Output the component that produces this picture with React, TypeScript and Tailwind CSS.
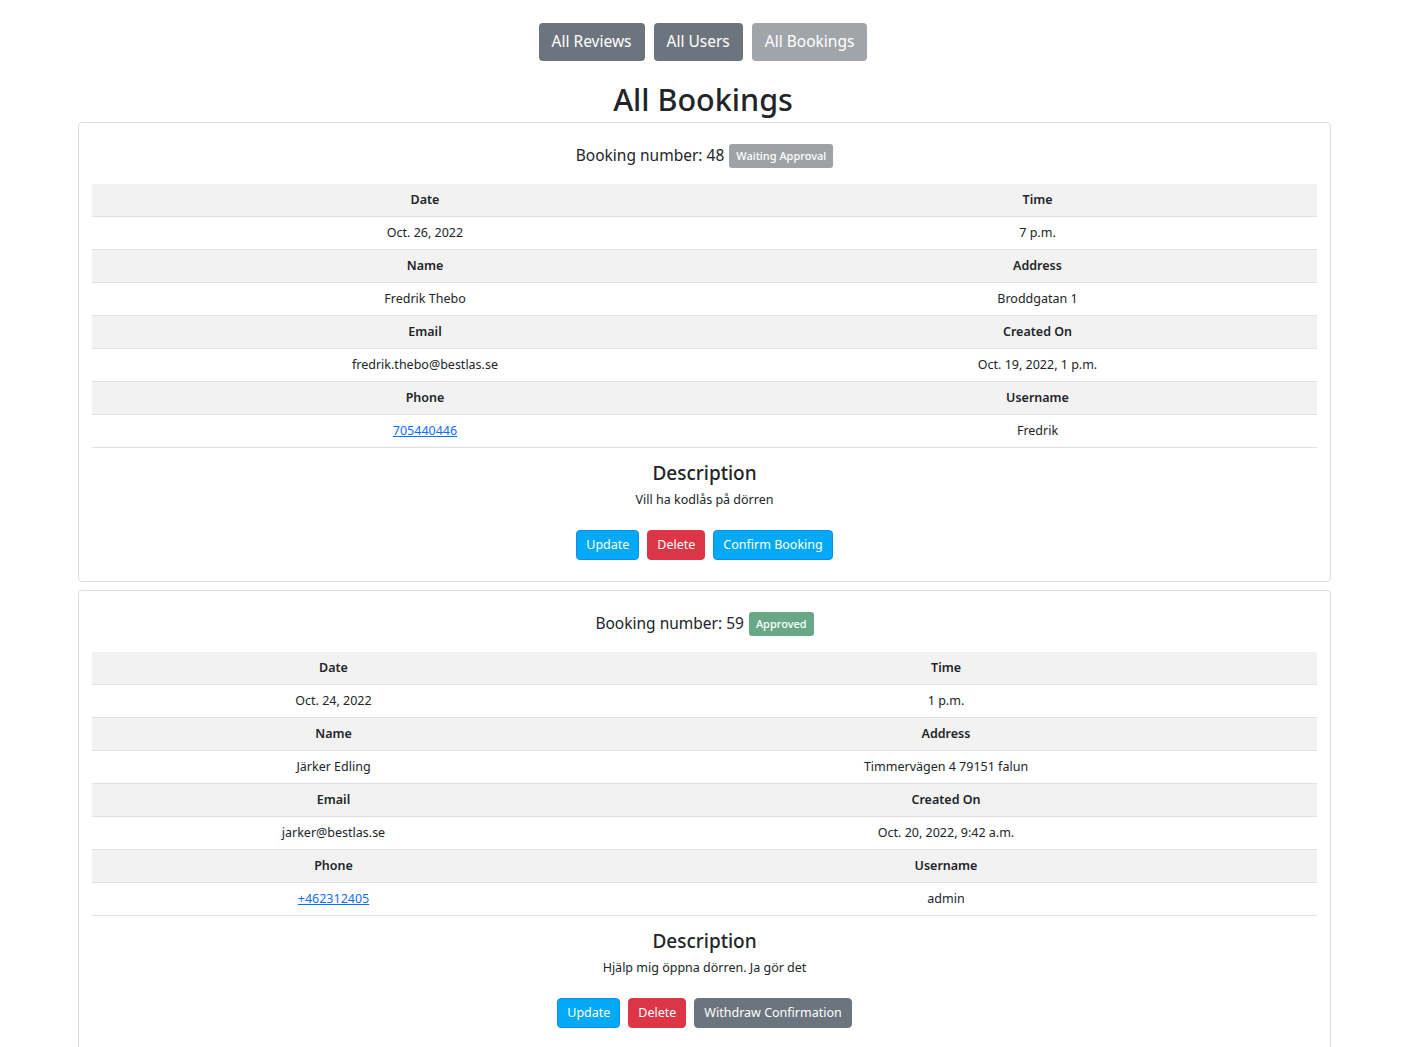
import React from 'react';

type Booking = {
  number: number;
  status: 'waiting' | 'approved';
  date: string;
  time: string;
  name: string;
  address: string;
  email: string;
  createdOn: string;
  phone: string;
  username: string;
  description: string;
  colClass: string;
};

const bookings: Booking[] = [
  {
    number: 48,
    status: 'waiting',
    date: 'Oct. 26, 2022',
    time: '7 p.m.',
    name: 'Fredrik Thebo',
    address: 'Broddgatan 1',
    email: 'fredrik.thebo@bestlas.se',
    createdOn: 'Oct. 19, 2022, 1 p.m.',
    phone: '705440446',
    username: 'Fredrik',
    description: 'Vill ha kodlås på dörren',
    colClass: 'grid-cols-[666px_1fr]',
  },
  {
    number: 59,
    status: 'approved',
    date: 'Oct. 24, 2022',
    time: '1 p.m.',
    name: 'Järker Edling',
    address: 'Timmervägen 4 79151 falun',
    email: 'jarker@bestlas.se',
    createdOn: 'Oct. 20, 2022, 9:42 a.m.',
    phone: '+462312405',
    username: 'admin',
    description: 'Hjälp mig öppna dörren. Ja gör det',
    colClass: 'grid-cols-[483px_1fr]',
  },
];

const HeadRow: React.FC<{ cols: string; a: string; b: string }> = ({ cols, a, b }) => (
  <div className={`grid ${cols} h-[33px] items-center bg-[#f2f2f2] border-b border-[#dee2e6] text-[12.5px] font-semibold text-[#212529]`}>
    <div className="text-center">{a}</div>
    <div className="text-center">{b}</div>
  </div>
);

const DataRow: React.FC<{ cols: string; a: React.ReactNode; b: React.ReactNode }> = ({ cols, a, b }) => (
  <div className={`grid ${cols} h-[33px] items-center bg-white border-b border-[#dee2e6] text-[12.5px] text-[#212529]`}>
    <div className="text-center">{a}</div>
    <div className="text-center">{b}</div>
  </div>
);

const BookingCard: React.FC<{ b: Booking }> = ({ b }) => (
  <div className="border border-[#dcdcdc] rounded-[4px] px-[13px] pt-[21px] pb-[21px] mb-[8px]">
    <div className="flex items-center justify-center h-[24px] mb-[16px]">
      <span className="text-[15.5px] text-[#212529]">Booking number: {b.number}</span>
      {b.status === 'waiting' ? (
        <span className="ml-[5px] h-[24px] px-[7px] flex items-center rounded-[3px] bg-[#9ea2a7] text-white text-[11px] font-medium">
          Waiting Approval
        </span>
      ) : (
        <span className="ml-[5px] h-[24px] px-[7px] flex items-center rounded-[3px] bg-[#67a986] text-white text-[11px] font-medium">
          Approved
        </span>
      )}
    </div>

    <div>
      <HeadRow cols={b.colClass} a="Date" b="Time" />
      <DataRow cols={b.colClass} a={b.date} b={b.time} />
      <HeadRow cols={b.colClass} a="Name" b="Address" />
      <DataRow cols={b.colClass} a={b.name} b={b.address} />
      <HeadRow cols={b.colClass} a="Email" b="Created On" />
      <DataRow cols={b.colClass} a={b.email} b={b.createdOn} />
      <HeadRow cols={b.colClass} a="Phone" b="Username" />
      <DataRow
        cols={b.colClass}
        a={<a href="#" className="text-[#0d6efd] underline">{b.phone}</a>}
        b={b.username}
      />
    </div>

    <h3 className="text-center text-[19px] font-medium text-[#212529] leading-[24px] mt-[13px]">Description</h3>
    <p className="text-center text-[12.5px] text-[#212529] leading-[20px] mt-[5px]">{b.description}</p>

    <div className="flex justify-center gap-[8px] mt-[20px]">
      <button className="h-[30px] px-[9px] rounded-[4px] bg-[#03a9f4] border border-[#0d8ce8] text-white text-[12.5px]">Update</button>
      <button className="h-[30px] px-[9px] rounded-[4px] bg-[#dc3545] border border-[#dc3545] text-white text-[12.5px]">Delete</button>
      {b.status === 'waiting' ? (
        <button className="h-[30px] px-[9px] rounded-[4px] bg-[#03a9f4] border border-[#0d8ce8] text-white text-[12.5px]">Confirm Booking</button>
      ) : (
        <button className="h-[30px] px-[9px] rounded-[4px] bg-[#6c757d] border border-[#6c757d] text-white text-[12.5px]">Withdraw Confirmation</button>
      )}
    </div>
  </div>
);

export default function App() {
  return (
    <div className="min-h-screen bg-white font-['Noto_Sans','Open_Sans',sans-serif] text-[#212529]">
      <nav className="flex justify-center gap-[9px] pt-[23px]">
        <button className="h-[38px] px-[13px] rounded-[4px] bg-[#6c757d] text-white text-[15.5px]">All Reviews</button>
        <button className="h-[38px] px-[13px] rounded-[4px] bg-[#6c757d] text-white text-[15.5px]">All Users</button>
        <button className="h-[38px] px-[13px] rounded-[4px] bg-[#a0a5aa] text-white text-[15.5px]">All Bookings</button>
      </nav>

      <h1 className="text-center text-[30.5px] font-medium leading-[38px] mt-[19px] mb-[4px]">All Bookings</h1>

      <div className="ml-[78px] w-[1253px]">
        {bookings.map((b) => (
          <BookingCard key={b.number} b={b} />
        ))}
      </div>
    </div>
  );
}
